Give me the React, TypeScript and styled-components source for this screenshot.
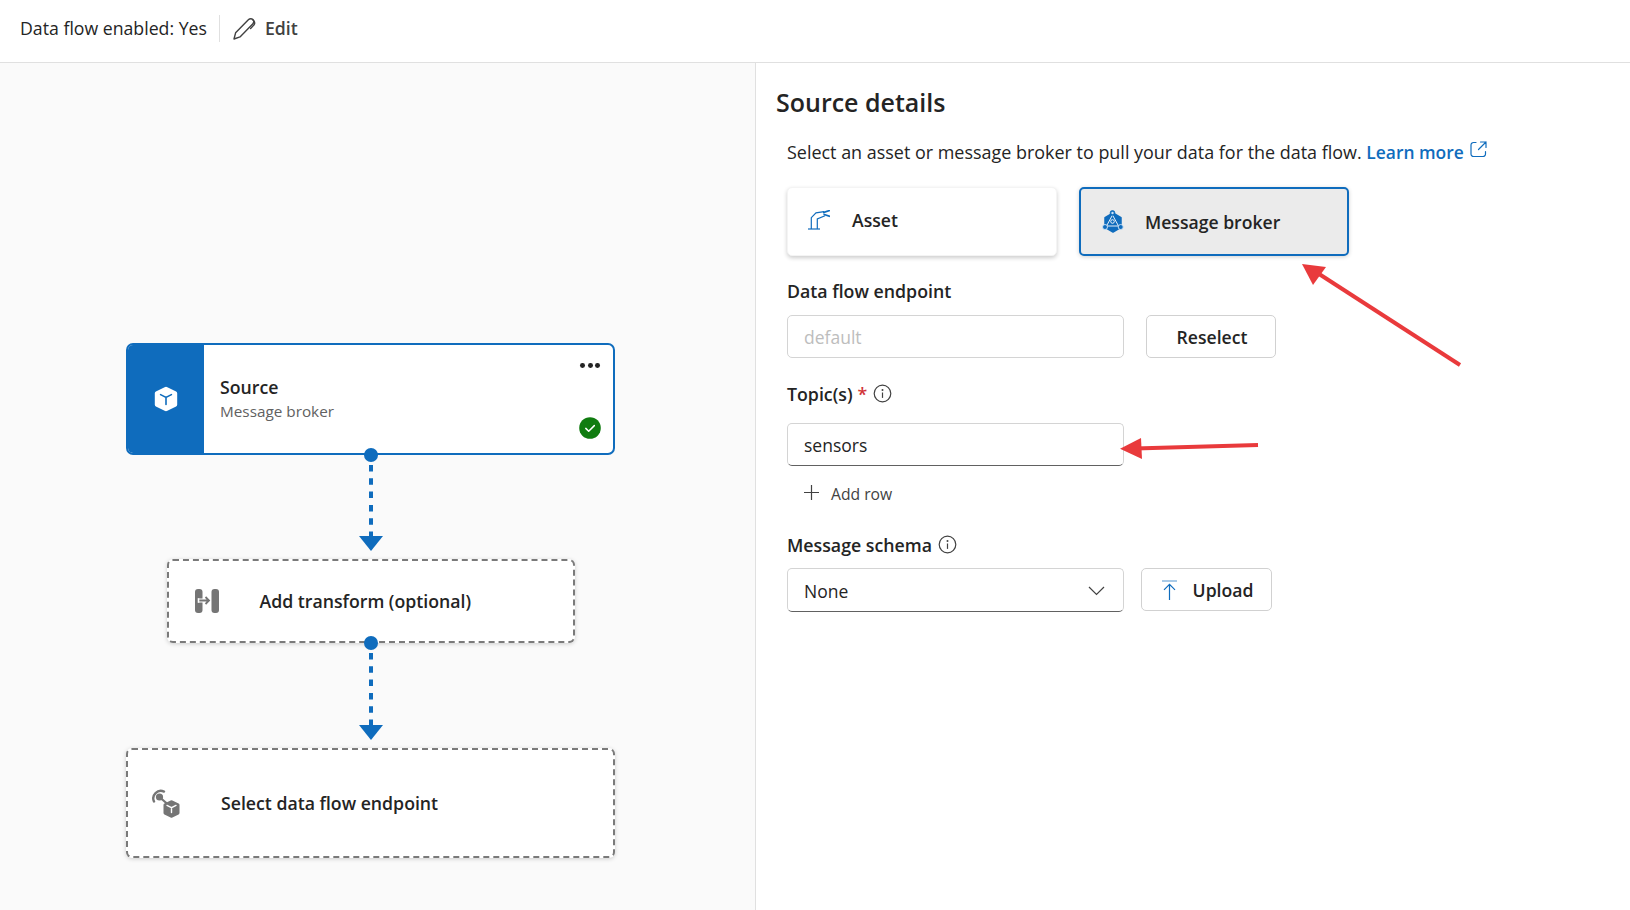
import React from "react";
import styled, { createGlobalStyle } from "styled-components";

const GlobalStyle = createGlobalStyle`
  html, body {
    margin: 0;
    padding: 0;
    background: #ffffff;
  }
  body {
    font-family: "Open Sans", "Noto Sans", "Liberation Sans", sans-serif;
    color: #242424;
  }
  * {
    box-sizing: border-box;
  }
`;

const Page = styled.div`
  position: relative;
  width: 1630px;
  height: 910px;
  overflow: hidden;
  display: flex;
  flex-direction: column;
`;

const TopBar = styled.header`
  height: 63px;
  flex: none;
  display: flex;
  align-items: center;
  padding: 0 0 6px 20px;
  border-bottom: 1px solid #e0e0e0;
  font-size: 17.7px;
`;

const TopDivider = styled.span`
  width: 1px;
  height: 27px;
  margin: 0 13px 0 12px;
  background: #e0e0e0;
`;

const EditButton = styled.span`
  display: flex;
  align-items: center;
  gap: 9px;
  font-weight: 600;
  color: #424242;
`;

const Main = styled.main`
  flex: 1;
  display: flex;
  min-height: 0;
`;

const CanvasPanel = styled.section`
  width: 756px;
  flex: none;
  padding: 280px 0 0 126px;
  background: #fafafa;
  border-right: 1px solid #e0e0e0;
`;

const Diagram = styled.div`
  width: 489px;
  display: flex;
  flex-direction: column;
  align-items: center;
`;

const SourceNode = styled.div`
  width: 100%;
  height: 112px;
  display: flex;
  align-items: stretch;
  position: relative;
  background: #ffffff;
  border: 2.5px solid #0f6cbd;
  border-radius: 7px;
  overflow: hidden;
`;

const NodeStrip = styled.div`
  width: 76px;
  flex: none;
  display: flex;
  align-items: center;
  justify-content: center;
  background: #0f6cbd;
`;

const NodeText = styled.div`
  display: flex;
  flex-direction: column;
  justify-content: center;
  padding-left: 16px;
`;

const NodeTitle = styled.div`
  font-size: 17.7px;
  line-height: 25px;
  font-weight: 600;
  margin-top: -2px;
`;

const NodeSubtitle = styled.div`
  font-size: 15.3px;
  line-height: 22px;
  color: #616161;
`;

const NodeMenu = styled.div`
  position: absolute;
  top: 18px;
  right: 13px;
  display: flex;
  gap: 2.6px;
`;

const MenuDot = styled.span`
  width: 4.8px;
  height: 4.8px;
  border-radius: 50%;
  background: #242424;
`;

const NodeStatus = styled.div`
  position: absolute;
  right: 12px;
  bottom: 14px;
  display: flex;
`;

const DashedNode = styled.div<{ $width: number; $height: number; $inset: number; $gap: number }>`
  width: ${(p) => p.$width}px;
  height: ${(p) => p.$height}px;
  display: flex;
  align-items: center;
  gap: ${(p) => p.$gap}px;
  padding-left: ${(p) => p.$inset}px;
  background: #ffffff;
  border: 2px dashed #7a7a7a;
  border-radius: 6px;
  box-shadow: 0 1px 4px rgba(0, 0, 0, 0.18);
  font-size: 17.7px;
  font-weight: 600;
`;

const Connector = styled.div<{ $height: number }>`
  position: relative;
  width: 24px;
  height: ${(p) => p.$height}px;
  display: flex;
`;

const Handle = styled.span`
  position: absolute;
  top: -7px;
  left: 5px;
  width: 14px;
  height: 14px;
  border-radius: 50%;
  background: #0f6cbd;
`;

const DetailsPanel = styled.section`
  flex: 1;
  padding: 21px 0 0 20px;
`;

const PanelTitle = styled.h2`
  margin: 0;
  font-size: 25px;
  line-height: 36px;
  font-weight: 600;
`;

const PanelBody = styled.div`
  padding-left: 11px;
`;

const Description = styled.p`
  display: flex;
  margin: 20px 0 0;
  font-size: 17.95px;
  line-height: 24px;
  white-space: pre;
`;

const LearnMore = styled.a`
  display: flex;
  gap: 6px;
  font-size: 17.4px;
  font-weight: 600;
  color: #0f6cbd;
`;

const ExternalIcon = styled.svg`
  margin-top: 1px;
`;

const SourceOptions = styled.div`
  display: flex;
  gap: 22px;
  margin-top: 23px;
`;

const SourceOption = styled.div<{ $selected?: boolean }>`
  width: 270px;
  height: 69px;
  display: flex;
  align-items: center;
  gap: ${(p) => (p.$selected ? 21 : 22)}px;
  padding-left: ${(p) => (p.$selected ? 21 : 20)}px;
  padding-bottom: ${(p) => (p.$selected ? 0 : 4)}px;
  font-size: 17.6px;
  font-weight: 600;
  border-radius: 5px;
  background: ${(p) => (p.$selected ? "#ebebeb" : "#ffffff")};
  border: ${(p) => (p.$selected ? "2.5px solid #0f6cbd" : "1px solid #f4f4f4")};
  box-shadow: ${(p) => (p.$selected ? "0 1px 4px rgba(0, 0, 0, 0.18)" : "0 2px 4px rgba(0, 0, 0, 0.2)")};
`;

const FieldLabel = styled.div<{ $top: number }>`
  display: flex;
  align-items: center;
  margin-top: ${(p) => p.$top}px;
  height: 24px;
  font-size: 17.75px;
  font-weight: 600;
`;

const RequiredMark = styled.span`
  color: #d13438;
  margin-left: 5px;
`;

const InfoIcon = styled.svg`
  margin-left: 6px;
  margin-top: -2px;
`;

const FieldRow = styled.div<{ $top: number; $gap: number }>`
  display: flex;
  align-items: flex-start;
  gap: ${(p) => p.$gap}px;
  margin-top: ${(p) => p.$top}px;
`;

const TextBox = styled.div<{ $height: number; $disabled?: boolean }>`
  width: 337px;
  height: ${(p) => p.$height}px;
  display: flex;
  align-items: center;
  justify-content: space-between;
  padding: 1px 18px 0 16px;
  font-size: 17.5px;
  border-radius: 5px;
  border: 1px solid #d4d4d4;
  border-bottom-color: ${(p) => (p.$disabled ? "#d4d4d4" : "#616161")};
  background: #ffffff;
  color: ${(p) => (p.$disabled ? "#bdbdbd" : "#242424")};
`;

const OutlineButton = styled.div<{ $width: number }>`
  width: ${(p) => p.$width}px;
  height: 43px;
  display: flex;
  align-items: center;
  justify-content: center;
  gap: 16px;
  padding: 1px 0 0 2px;
  font-size: 17.6px;
  font-weight: 600;
  border-radius: 5px;
  border: 1px solid #d1d1d1;
  background: #ffffff;
`;

const AddRow = styled.div`
  display: flex;
  align-items: center;
  gap: 12px;
  height: 24px;
  margin-top: 16px;
  padding-left: 17px;
  font-size: 15.7px;
  color: #424242;
`;

const PlusIcon = styled.svg`
  margin-top: -3px;
`;

const Annotations = styled.svg`
  position: absolute;
  inset: 0;
  pointer-events: none;
`;

function ConnectorLine({ height }: { height: number }) {
  return (
    <Connector $height={height}>
      <Handle />
      <svg width="24" height={height} viewBox={`0 0 24 ${height}`}>
        <line x1="12" y1="10" x2="12" y2={height - 22} stroke="#0f6cbd" strokeWidth="4" strokeDasharray="6.5 6.8" />
        <path d={`M0 ${height - 23}H24L12 ${height - 8}Z`} fill="#0f6cbd" />
      </svg>
    </Connector>
  );
}

function Info() {
  return (
    <InfoIcon width="19" height="19" viewBox="0 0 19 19" fill="none">
      <circle cx="9.5" cy="9.5" r="8.3" stroke="#424242" strokeWidth="1.2" />
      <circle cx="9.5" cy="5.9" r="1" fill="#424242" />
      <path d="M9.5 8.5v5.4" stroke="#424242" strokeWidth="1.2" />
    </InfoIcon>
  );
}

export default function App() {
  return (
    <Page>
      <GlobalStyle />
      <TopBar>
        Data flow enabled: Yes
        <TopDivider />
        <EditButton>
          <svg width="23" height="23" viewBox="0 0 23 23" fill="none" stroke="#424242" strokeWidth="1.4" strokeLinejoin="round" strokeLinecap="round">
            <path d="M1 22l1.6-6.2L15.6 2.6a3 3 0 0 1 4.3 0 3 3 0 0 1 0 4.2L7 19.9 1 22z" />
            <path d="M19.9 3c1.8 1.4 2.2 3.2 1.2 4.8L17.6 11.4" />
          </svg>
          Edit
        </EditButton>
      </TopBar>
      <Main>
        <CanvasPanel>
          <Diagram>
            <SourceNode>
              <NodeStrip>
                <svg width="26" height="26" viewBox="0 0 26 26">
                  <path d="M11.6 1.2a3 3 0 0 1 2.8 0l8.7 4.2a2 2 0 0 1 1.1 1.8v11.6a2 2 0 0 1-1.1 1.8l-8.7 4.2a3 3 0 0 1-2.8 0l-8.7-4.2a2 2 0 0 1-1.1-1.8V7.2a2 2 0 0 1 1.1-1.8z" fill="#fff" />
                  <path d="M7.6 8.6L13 11.4l5.4-2.8M13 11.4V18.4" fill="none" stroke="#0f6cbd" strokeWidth="1.6" strokeLinecap="round" />
                </svg>
              </NodeStrip>
              <NodeText>
                <NodeTitle>Source</NodeTitle>
                <NodeSubtitle>Message broker</NodeSubtitle>
              </NodeText>
              <NodeMenu>
                <MenuDot />
                <MenuDot />
                <MenuDot />
              </NodeMenu>
              <NodeStatus>
                <svg width="22" height="22" viewBox="0 0 22 22">
                  <circle cx="11" cy="11" r="10.8" fill="#107c10" />
                  <path d="M6.8 11.4l2.9 2.8 5.6-5.6" fill="none" stroke="#fff" strokeWidth="1.5" strokeLinecap="round" strokeLinejoin="round" />
                </svg>
              </NodeStatus>
            </SourceNode>
            <ConnectorLine height={104} />
            <DashedNode $width={408} $height={84} $inset={26} $gap={41}>
              <svg width="24" height="24" viewBox="0 0 24 24">
                <rect x="0" y="0" width="7.5" height="24" rx="3" fill="#757575" />
                <rect x="16.5" y="0" width="7.5" height="24" rx="3" fill="#757575" />
                <path d="M3.5 11.5h10" stroke="#fff" strokeWidth="4" />
                <path d="M3.5 11.5h10.5M10.5 8l3.5 3.5-3.5 3.5" fill="none" stroke="#757575" strokeWidth="1.8" />
                <path d="M3.5 9.2v4.6" stroke="#fff" strokeWidth="1.6" />
              </svg>
              Add transform (optional)
            </DashedNode>
            <ConnectorLine height={105} />
            <DashedNode $width={489} $height={110} $inset={23} $gap={40}>
              <svg width="30" height="29" viewBox="0 0 30 29" fill="none">
                <path d="M3 12.5A7.5 7.5 0 0 1 13 2.6" stroke="#757575" strokeWidth="2.4" strokeLinecap="round" />
                <circle cx="8.5" cy="8" r="3.6" fill="#757575" />
                <path d="M9 8.5l8 7" stroke="#757575" strokeWidth="2.2" />
                <path d="M19.6 11.6a2 2 0 0 1 1.8 0l6.2 3a1.5 1.5 0 0 1 .9 1.4v8a1.5 1.5 0 0 1-.9 1.4l-6.2 3a2 2 0 0 1-1.8 0l-6.2-3a1.5 1.5 0 0 1-.9-1.4v-8a1.5 1.5 0 0 1 .9-1.4z" fill="#757575" />
                <path d="M16 16.4l4.5 2.2 4.5-2.2M20.5 18.6v5" stroke="#fff" strokeWidth="1.4" strokeLinecap="round" />
              </svg>
              Select data flow endpoint
            </DashedNode>
          </Diagram>
        </CanvasPanel>
        <DetailsPanel>
          <PanelTitle>Source details</PanelTitle>
          <PanelBody>
            <Description>
              Select an asset or message broker to pull your data for the data flow.{" "}
              <LearnMore>
                Learn more
                <ExternalIcon width="17" height="17" viewBox="0 0 17 17" fill="none" stroke="#0f6cbd" strokeWidth="1.2" strokeLinecap="round">
                  <path d="M6 1.5H3.5a2.5 2.5 0 0 0-2.5 2.5v9a2.5 2.5 0 0 0 2.5 2.5h9.5a2.5 2.5 0 0 0 2.5-2.5v-2.5" />
                  <path d="M10.5 1H16v5.5M16 1L8.5 8.5" />
                </ExternalIcon>
              </LearnMore>
            </Description>
            <SourceOptions>
              <SourceOption>
                <svg width="22" height="20" viewBox="0 0 22 20" fill="none" stroke="#0f6cbd" strokeWidth="1.2">
                  <path d="M0 19h12" />
                  <path d="M3.3 19V7.7L8 2.8 16 1.7M9.3 19V9L17 5.7" />
                  <path d="M15 2.6L22 0.4M15.5 4.2L22 6.4" strokeWidth="1.7" />
                </svg>
                Asset
              </SourceOption>
              <SourceOption $selected>
                <svg width="22" height="23" viewBox="0 0 22 23">
                  <path d="M11 3l8 4.6v9.8L11 22 3 17.4V7.6z" fill="#0f6cbd" stroke="#0f6cbd" strokeWidth="1.5" strokeLinejoin="round" />
                  <path d="M10.5 5L4.5 16h12z" fill="none" stroke="#fff" strokeWidth="0.9" />
                  <circle cx="10.5" cy="3" r="2.4" fill="#0f6cbd" stroke="#0f6cbd" strokeWidth="0.8" />
                  <circle cx="10.5" cy="3" r="1.2" fill="#cfe4f7" />
                  <circle cx="3" cy="17" r="2.5" fill="#0f6cbd" stroke="#cfe4f7" strokeWidth="0.9" />
                  <circle cx="18.7" cy="17" r="2.5" fill="#0f6cbd" stroke="#cfe4f7" strokeWidth="0.9" />
                  <circle cx="10.5" cy="11.5" r="1.8" fill="#0f6cbd" stroke="#fff" strokeWidth="0.9" />
                </svg>
                Message broker
              </SourceOption>
            </SourceOptions>
            <FieldLabel $top={23}>Data flow endpoint</FieldLabel>
            <FieldRow $top={12} $gap={22}>
              <TextBox $height={43} $disabled>
                default
              </TextBox>
              <OutlineButton $width={130}>Reselect</OutlineButton>
            </FieldRow>
            <FieldLabel $top={24}>
              Topic(s)
              <RequiredMark>*</RequiredMark>
              <Info />
            </FieldLabel>
            <FieldRow $top={17} $gap={22}>
              <TextBox $height={43}>sensors</TextBox>
            </FieldRow>
            <AddRow>
              <PlusIcon width="15" height="15" viewBox="0 0 15 15" stroke="#424242" strokeWidth="1.2">
                <path d="M7.5 0v15M0 7.5h15" />
              </PlusIcon>
              Add row
            </AddRow>
            <FieldLabel $top={27}>
              Message schema
              <Info />
            </FieldLabel>
            <FieldRow $top={11} $gap={17}>
              <TextBox $height={44}>
                None
                <svg width="17" height="10" viewBox="0 0 17 10" fill="none" stroke="#424242" strokeWidth="1.2">
                  <path d="M1 1l7.5 7.5L16 1" />
                </svg>
              </TextBox>
              <OutlineButton $width={131}>
                <svg width="15" height="20" viewBox="0 0 15 20" fill="none" stroke="#0f6cbd" strokeWidth="1.2">
                  <path d="M0 1h15" strokeOpacity="0.6" />
                  <path d="M7.5 4.5V20M2 9.8l5.5-5.5 5.5 5.5" />
                </svg>
                Upload
              </OutlineButton>
            </FieldRow>
          </PanelBody>
        </DetailsPanel>
      </Main>
      <Annotations width="1630" height="910" viewBox="0 0 1630 910">
        <path d="M1460 365L1316 272" stroke="#e93a3c" strokeWidth="4" />
        <path d="M1302 264L1326 267L1313 285Z" fill="#e93a3c" />
        <path d="M1258 445L1135 448.5" stroke="#e93a3c" strokeWidth="4" />
        <path d="M1120 448.7L1141 438L1142 459Z" fill="#e93a3c" />
      </Annotations>
    </Page>
  );
}
